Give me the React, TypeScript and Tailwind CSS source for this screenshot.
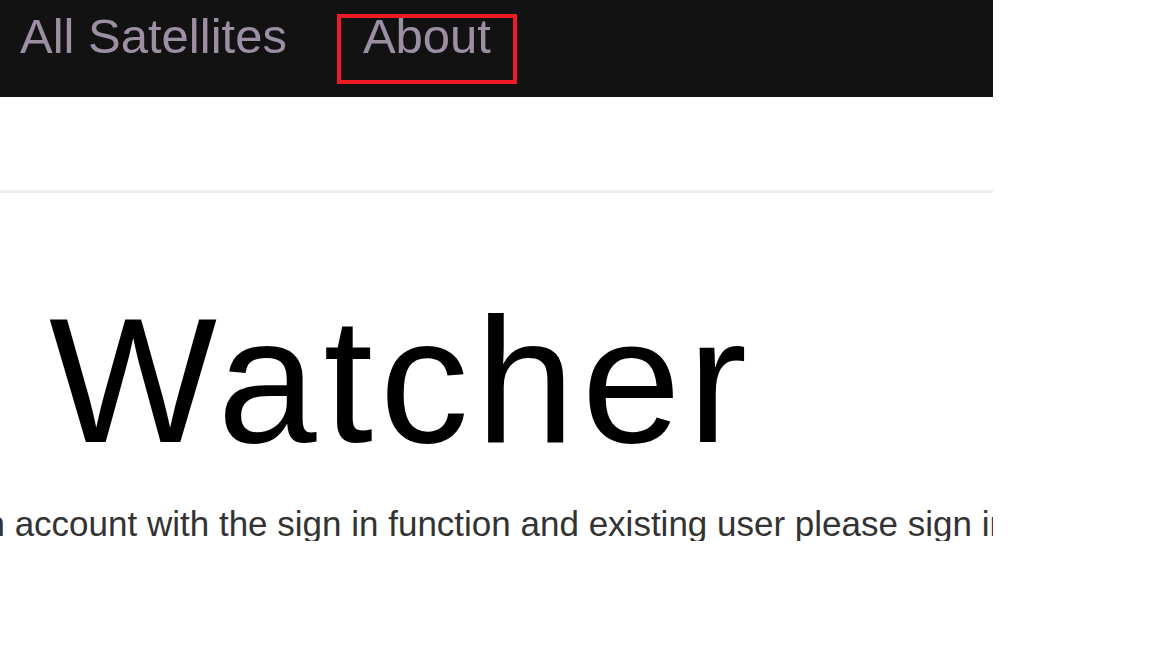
export default function App() {
  return (
    <div className="min-h-screen bg-white">
      <div className="w-[993px] overflow-hidden bg-white font-['Liberation_Sans',Arial,sans-serif]">
        {/* Navbar */}
        <nav className="flex h-[97px] items-start bg-[#121212] text-[49px] leading-[36px] text-[#9c8fa3]">
          <a className="ml-[20px] mt-[18px] whitespace-nowrap">All Satellites</a>
          <a className="ml-[50px] mt-[14px] h-[70px] whitespace-nowrap border-4 border-[#ed1c24] px-[22px]">
            About
          </a>
        </nav>

        {/* Divider */}
        <div className="mt-[93px] h-[3px] bg-[#eeeeee]" />

        {/* Hero */}
        <h1 className="ml-[49px] mt-[99px] whitespace-nowrap text-[178px] font-normal leading-none tracking-[7px] text-black">
          Watcher
        </h1>
        <p className="-ml-[34px] mt-[36px] whitespace-nowrap text-[35px] leading-none text-[#333333]">
          an account with the sign in function and existing user please sign in.
        </p>
      </div>
    </div>
  );
}
